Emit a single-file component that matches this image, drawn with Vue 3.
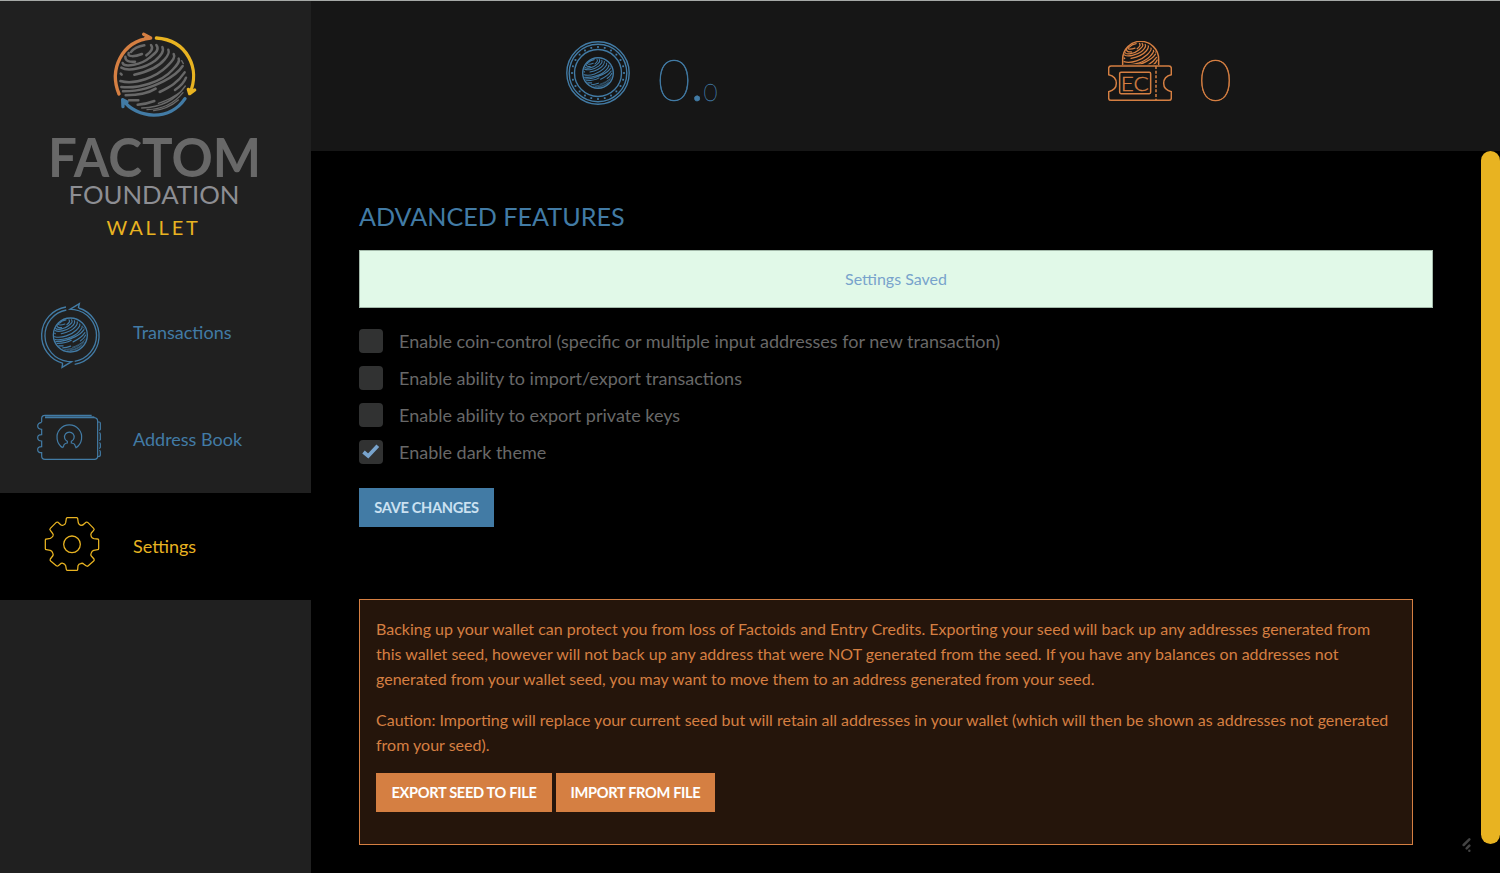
<script setup>
import { ref } from 'vue'

const nav = [
  { id: 'tx', label: 'Transactions' },
  { id: 'book', label: 'Address Book' },
  { id: 'settings', label: 'Settings' },
]
const active = ref('settings')
const options = ref([
  { label: 'Enable coin-control (specific or multiple input addresses for new transaction)', on: false },
  { label: 'Enable ability to import/export transactions', on: false },
  { label: 'Enable ability to export private keys', on: false },
  { label: 'Enable dark theme', on: true },
])
const dots = Array.from({ length: 24 }, (_, i) => {
  const a = (i * Math.PI) / 12
  return { x: 32 + 26 * Math.cos(a), y: 32 + 26 * Math.sin(a) }
})
</script>

<template>
  <div class="app">
    <svg class="defs" width="0" height="0">
      <symbol id="globe" viewBox="72 68 206 206" overflow="visible">
        <g fill="none" stroke="currentColor" stroke-linecap="round">
          <path d="M108 96C116 86 130 79 148 76M101 99C96 112 120 110 141 102M91 110C90 125 105 126 120 125M154 106C168 95 176 85 168 75M83 129C88 144 140 134 164 113C184 97 194 88 184 75M79 143C100 156 150 144 180 122C202 104 208 92 202 81M118 164C150 157 190 141 209 118C222 103 223 97 220 89M77 161L80 164M76 183C120 196 185 170 215 140C237 118 241 110 236 102M79 201C130 207 200 186 232 150C249 132 255 124 251 116M84 214C140 214 172 200 205 184C235 169 250 158 263 138M194 216C225 201 248 188 269 157M92 226C140 225 162 219 182 206M102 241H130M240 210C258 198 268 187 273 173M128 254C150 253 160 250 178 243"/>
          <path class="fine" d="M260 122L265 131M140 264C200 262 242 240 271 198M156 269C205 268 238 250 264 218M176 272C210 268 234 254 250 240M190 250C215 242 240 229 260 213"/>
        </g>
      </symbol>
    </svg>

    <aside class="sidebar">
      <div class="brand">
        <svg class="emblem" viewBox="0 0 360 330">
          <use class="planet" href="#globe" x="72" y="68" width="206" height="206" />
          <g fill="none" stroke-width="10" stroke-linecap="round" stroke-linejoin="round">
            <path stroke="#d57f42" d="M72 222C42 150 78 64 167 54L146 43M167 54L151 55" />
            <path stroke="#e8b321" d="M184 54C275 60 318 145 284 221L299 210M284 221L280 208" />
            <path stroke="#427ba5" d="M270 236C225 304 126 298 83 239L84 260M83 239L96 246" />
          </g>
        </svg>
        <svg class="wordmark" viewBox="0 0 230 120">
          <text class="w1" x="8" y="51.500" textLength="213" lengthAdjust="spacingAndGlyphs">FACTOM</text>
          <text class="w2" x="28.500" y="79" textLength="171" lengthAdjust="spacingAndGlyphs">FOUNDATION</text>
          <text class="w3" x="66.500" y="110">WALLET</text>
        </svg>
      </div>

      <nav>
        <a v-for="n in nav" :key="n.id" class="item" :class="{ active: n.id === active }" @click="active = n.id">
          <svg v-if="n.id === 'tx'" class="icon" viewBox="1 -6 220 240">
            <use class="mini" href="#globe" x="73" y="71" width="97" height="97" />
            <g fill="none" stroke="currentColor" stroke-width="4">
              <circle cx="122" cy="120" r="51" />
              <path d="M109 36A86.500 86.500 0 0 0 100 205M110 45A78 78 0 0 0 113 199L126 200L97 217L99 205M135 208A87 87 0 0 0 147 39M135 199A78.500 78.500 0 0 0 134 44L121 43L149 26L146 39" />
            </g>
          </svg>
          <svg v-else-if="n.id === 'book'" class="icon" viewBox="0 0 220 240">
            <g fill="none" stroke="currentColor" stroke-width="3.6">
              <path d="M35 66V54Q36 46 45 46H185M45 53H193Q203 54 203 64V168Q203 178 193 178H45Q35 178 35 168V158Q23 158 23 149Q23 140 35 140V123Q23 122 23 113Q23 104 35 104V88Q23 87 23 78Q23 69 35 67" />
              <path d="M45 50H193" opacity=".65" />
              <path d="M203 66H208Q211 66 211 70V88L208 92M208 98Q211 99 211 103V119L208 122M208 128Q211 129 211 132V142L208 146M208 151Q211 152 211 155V165Q211 170 203 170" />
              <path d="M98 143A37 37 0 1 1 138 143L134 134Q134 131 124 129V124A14.500 14.500 0 1 0 112 124V129Q101 131 101 138L98 143" />
            </g>
          </svg>
          <svg v-else class="icon" viewBox="0 6 220 240">
            <g fill="none" stroke="currentColor" stroke-width="3.8" stroke-linejoin="round">
              <path d="M109 41Q109 38 112 38H140Q143 38 143 41L145 54Q147 59 153 61Q159 61 162 57L168 52Q171 50 174 53L191 70Q194 73 191 76L184 84Q181 88 184 95Q186 100 192 101L203 102Q206 102 206 105V131Q206 134 203 134L191 136Q186 138 184 143Q181 149 184 153L192 162Q194 165 191 168L174 183Q171 185 168 182L161 177Q157 173 152 176Q146 177 144 182L143 194Q143 196 140 196H112Q109 196 109 193L107 182Q105 177 99 175Q94 173 90 178L85 182Q82 185 79 182L62 168Q59 165 61 162L68 153Q71 149 68 143Q66 138 61 136L49 134Q46 134 46 131V105Q46 102 49 102L61 100Q66 98 69 93Q71 88 67 84L61 76Q58 73 61 70L78 53Q81 50 84 52L92 59Q96 62 101 60Q106 58 107 53Z" />
              <circle cx="126" cy="118" r="25" />
            </g>
          </svg>
          <span>{{ n.label }}</span>
        </a>
      </nav>
    </aside>

    <div class="main">
      <header class="balances">
        <div class="balance blue">
          <svg class="coin" viewBox="0 0 64 64">
            <g fill="none" stroke="currentColor" stroke-width="1.4">
              <circle cx="32" cy="32" r="31.200" /><circle cx="32" cy="32" r="28.800" />
              <circle cx="32" cy="32" r="23.500" /><circle cx="32" cy="32" r="15.300" />
            </g>
            <rect v-for="(d, i) in dots" :key="i" :x="d.x - 0.9" :y="d.y - 0.9" width="1.800" height="1.800" fill="currentColor" />
            <use class="mini" href="#globe" x="17.500" y="17.500" width="29" height="29" />
          </svg>
          <span class="amount">0<b>.</b><small>0</small></span>
        </div>
        <div class="balance orange">
          <svg class="ticket" viewBox="0 0 192 182">
            <defs><clipPath id="half"><rect x="38" y="0" width="120" height="70" /></clipPath></defs>
            <g clip-path="url(#half)"><use class="mini" href="#globe" x="46" y="4" width="104" height="104" /></g>
            <g fill="none" stroke="currentColor" stroke-width="4.500">
              <path d="M44 72V55A54 54 0 0 1 152 55V72" />
              <path d="M9 75H183Q190 75 190 82V101Q167 106 167 127Q167 147 190 152V171Q190 178 183 178H9Q2 178 2 171V152Q25 147 25 127Q25 106 2 101V82Q2 75 9 75Z" />
              <rect x="35" y="94" width="93" height="64" rx="4" />
              <path d="M144 75V178" stroke-dasharray="9 5" />
            </g>
            <text class="ec" x="38" y="149" textLength="84" lengthAdjust="spacingAndGlyphs">EC</text>
          </svg>
          <span class="amount">0</span>
        </div>
      </header>

      <div class="scroller">
        <main class="content">
          <h1>ADVANCED FEATURES</h1>
          <div class="saved">Settings Saved</div>
          <label v-for="o in options" :key="o.label" class="option">
            <input v-model="o.on" type="checkbox" />
            <span class="box">
              <svg v-if="o.on" viewBox="0 0 24 24"><path d="M4.500 12L9.200 16L18.800 5.800" fill="none" stroke="#78a3cc" stroke-width="3.800" /></svg>
            </span>
            <span>{{ o.label }}</span>
          </label>
          <button class="btn save">SAVE CHANGES</button>

          <section class="backup">
            <p>Backing up your wallet can protect you from loss of Factoids and Entry Credits. Exporting your seed will back up any addresses generated from<br />this wallet seed, however will not back up any address that were NOT generated from the seed. If you have any balances on addresses not<br />generated from your wallet seed, you may want to move them to an address generated from your seed.</p>
            <p>Caution: Importing will replace your current seed but will retain all addresses in your wallet (which will then be shown as addresses not generated<br />from your seed).</p>
            <div class="actions">
              <button class="btn seed export">EXPORT SEED TO FILE</button>
              <button class="btn seed import">IMPORT FROM FILE</button>
            </div>
          </section>
        </main>
        <div class="rail"><div class="thumb"></div></div>
        <svg class="grip" viewBox="0 0 30 42">
          <path d="M5 21L22 4M14 31L22 23M22 38V38.100" fill="none" stroke="#434343" stroke-width="7.500" stroke-linecap="round" />
        </svg>
      </div>
    </div>
  </div>
</template>

<style>
body { margin: 0; background: #000; overflow: hidden; }
</style>

<style scoped>
* { box-sizing: border-box; }
.app { display: flex; height: 873px; width: 1500px; border-top: 1px solid #a6a9a7; background: #000; font-family: Lato, Carlito, sans-serif; }
.defs { position: absolute; }
#globe g { stroke-width: 7.5; }
#globe .fine { stroke-width: 4; }
.sidebar { width: 311px; flex: none; background: #202020; }
.brand { height: 278px; padding: 19px 0 0 40px; }
.emblem { display: block; width: 120px; height: 110px; margin-left: 54.5px; }
.planet { color: #686868; }
.wordmark { display: block; width: 230px; height: 120px; margin-top: -5px; overflow: visible; }
.w1 { font-size: 54px; font-weight: 700; fill: #686868; }
.w2 { font-size: 25px; fill: #8d8e93; }
.w3 { font-size: 20px; letter-spacing: 2.8px; fill: #e8b321; }
.item { display: flex; align-items: center; height: 107px; padding-left: 30px; color: #427ba5; font-size: 18px; cursor: pointer; }
.item span { margin-bottom: 2px; }
.item.active { background: #000; color: #e8b321; }
.icon { width: 73.333px; height: 80px; margin-right: 29.667px; }
.main { flex: 1; display: flex; flex-direction: column; }
.balances { height: 150px; display: flex; background: #161616; }
.balance { display: flex; width: 594.5px; align-items: flex-start; }
.blue { color: #427ba5; padding-left: 255px; }
.orange { color: #d57f42; padding-left: 202px; }
.coin { width: 64px; height: 64px; margin-top: 40px; }
.ticket { width: 64px; height: 60.667px; margin-top: 40px; }
.ec { font-size: 60px; font-weight: 300; fill: currentColor; stroke: currentColor; stroke-width: 1px; }
.amount { font-size: 57px; font-weight: 100; line-height: 68px; margin: 44px 0 0 27.5px; white-space: nowrap; -webkit-text-stroke: 0.6px currentColor; }
.amount b { font-weight: 300; display: inline-block; width: 13px; text-align: center; }
.amount small { font-size: 24px; -webkit-text-stroke-width: 0.3px; }
.scroller { position: relative; flex: 1; display: flex; }
.content { width: 1170px; flex: none; padding: 50px 48px 0; }
h1 { margin: 0 0 18px; font-size: 25.15px; line-height: 31px; font-weight: 400; color: #427ba5; }
.saved { width: 1074px; height: 58px; line-height: 56px; margin-bottom: 21px; text-align: center; font-size: 16px; color: #78a3cc; background: #e1f9e8; border: 1px solid #a3b9aa; }
.option { display: flex; align-items: center; height: 24px; margin-bottom: 13px; font-size: 18px; color: #686868; white-space: nowrap; }
.option input { display: none; }
.box { width: 24px; height: 24px; margin-right: 16px; border-radius: 4px; background: #313232; }
.box svg { display: block; }
.btn { display: block; border: 0; height: 39px; padding: 0; font: 700 14.6px/39px Lato, Carlito, sans-serif; letter-spacing: -0.33px; }
.save { width: 135px; margin-top: 24px; color: #cbe1f1; background: #427ba5; }
.backup { width: 1054px; height: 246px; margin-top: 72px; padding: 16px 16px 0; border: 1px solid #d57f42; background: #25150b; color: #d57f42; font-size: 16px; line-height: 25px; white-space: nowrap; }
.backup p { margin: 0 0 16px; }
.actions { display: flex; gap: 4px; }
.seed { background: #d57f42; color: #fff; }
.export { width: 176px; }
.import { width: 159px; }
.rail { width: 19px; }
.thumb { height: 693px; border-radius: 10px; background: #e8b321; }
.grip { position: absolute; left: 1151px; top: 687px; width: 10px; height: 14px; }
</style>
